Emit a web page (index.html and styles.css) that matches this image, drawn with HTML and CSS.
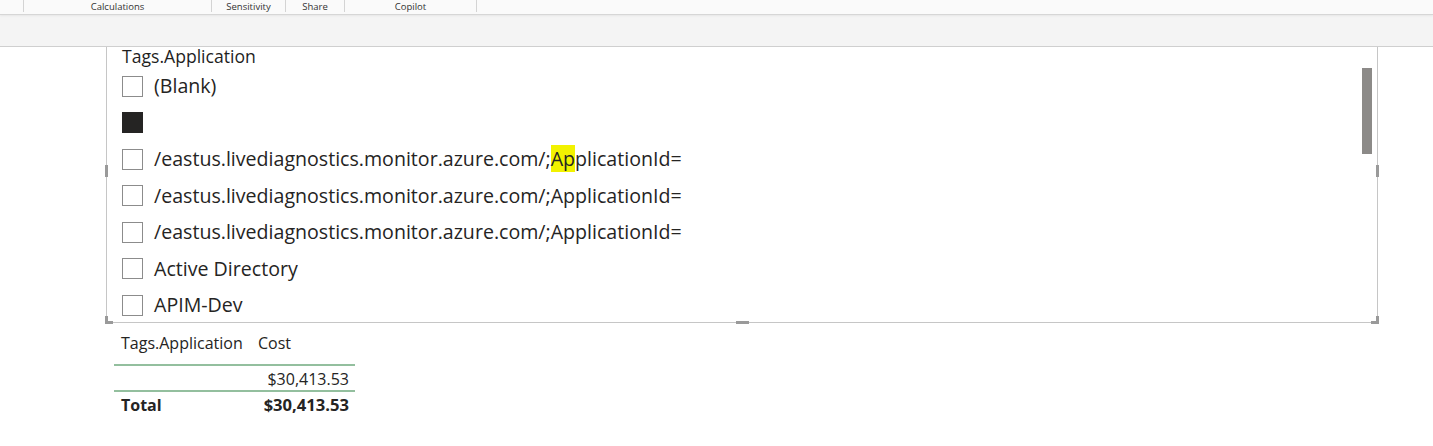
FILE: index.html
```html
<!DOCTYPE html>
<html>
<head>
<meta charset="utf-8">
<link rel="stylesheet" href="styles.css">
</head>
<body>
<div class="ribbon">
  <div class="seg seg0"></div>
  <div class="seg seg1">Calculations</div>
  <div class="seg seg2">Sensitivity</div>
  <div class="seg seg3">Share</div>
  <div class="seg seg4">Copilot</div>
</div>
<div class="toolbar"></div>
<div class="canvas">
  <div class="visual">
    <div class="slicer">
      <div class="title">Tags.Application</div>
      <div class="row first"><span class="box"></span><span class="label">(Blank)</span></div>
      <div class="row"><span class="box filled"></span><span class="label"></span></div>
      <div class="row"><span class="box"></span><span class="label">/eastus.livediagnostics.monitor.azure.com/;<span class="hl">Ap</span>plicationId=</span></div>
      <div class="row"><span class="box"></span><span class="label">/eastus.livediagnostics.monitor.azure.com/;ApplicationId=</span></div>
      <div class="row"><span class="box"></span><span class="label">/eastus.livediagnostics.monitor.azure.com/;ApplicationId=</span></div>
      <div class="row"><span class="box"></span><span class="label">Active Directory</span></div>
      <div class="row"><span class="box"></span><span class="label">APIM-Dev</span></div>
    </div>
    <div class="scrollbar"></div>
    <div class="handle h-left"></div>
    <div class="handle h-right"></div>
    <div class="handle h-bottom"></div>
    <div class="corner c-bl"></div>
    <div class="corner c-br"></div>
  </div>
  <div class="table">
    <div class="thead">
      <div class="c1">Tags.Application</div>
      <div class="c2">Cost</div>
    </div>
    <div class="tbody">
      <div class="c1"></div>
      <div class="c2 num">$30,413.53</div>
    </div>
    <div class="ttotal">
      <div class="c1">Total</div>
      <div class="c2 num">$30,413.53</div>
    </div>
  </div>
</div>
</body>
</html>
```
FILE: styles.css
```css
* { box-sizing: border-box; }
html, body { margin: 0; padding: 0; background: #ffffff; }
body { width: 1433px; height: 446px; overflow: hidden; font-family: "Open Sans", "Noto Sans", sans-serif; color: #252423; }

.ribbon {
  display: flex;
  height: 15px;
  background: #fafafa;
  border-bottom: 1px solid #d6d6d6;
  box-shadow: 0 1px 2px rgba(0,0,0,0.06);
  position: relative;
  z-index: 2;
}
.seg {
  height: 12px;
  border-right: 1px solid #d4d4d4;
  font-size: 9.5px;
  line-height: 14px;
  color: #333333;
  text-align: center;
  white-space: nowrap;
}
.seg0 { width: 24px; }
.seg1 { width: 188px; }
.seg2 { width: 74px; }
.seg3 { width: 59px; }
.seg4 { width: 132px; }

.toolbar {
  height: 32px;
  background: #f4f4f4;
  border-bottom: 1px solid #cfcfcf;
}

.canvas { padding-left: 106px; }

.visual {
  position: relative;
  width: 1272px;
  height: 276px;
  border-left: 1px solid #c6c6c6;
  border-right: 1px solid #c6c6c6;
  border-bottom: 1px solid #c6c6c6;
}
.slicer {
  padding-left: 15px;
}
.title {
  font-family: "Open Sans", "Noto Sans", sans-serif;
  font-size: 17.6px;
  line-height: 19px;
  height: 19px;
  color: #1f1f1f;
  font-weight: 500;
}
.row {
  display: flex;
  align-items: center;
  height: 36.5px;
}
.row.first { margin-top: 2px; }
.box {
  width: 21px;
  height: 21px;
  border: 1px solid #8c8c8c;
  background: #fff;
  flex: none;
}
.box.filled { background: #252423; border-color: #252423; }
.label {
  margin-left: 11px;
  font-size: 19.6px;
  line-height: 26px;
  white-space: nowrap;
  color: #252423;
}
.hl { background: #f2f200; }

.scrollbar {
  position: absolute;
  left: 1255px;
  top: 21px;
  width: 10px;
  height: 86px;
  background: #8c8a88;
}
.handle { position: absolute; background: #9a9a9a; }
.h-left { left: -2px; top: 118px; width: 3px; height: 12px; }
.h-right { right: -2px; top: 118px; width: 3px; height: 12px; }
.h-bottom { left: 629px; bottom: -2px; width: 13px; height: 3px; }
.corner { position: absolute; width: 8px; height: 8px; }
.c-bl { left: -2px; bottom: -2px; border-left: 3px solid #9a9a9a; border-bottom: 3px solid #9a9a9a; }
.c-br { right: -2px; bottom: -2px; border-right: 3px solid #9a9a9a; border-bottom: 3px solid #9a9a9a; }

.table {
  margin-left: 8px;
  width: 241px;
  font-size: 16px;
  line-height: 20px;
  color: #252423;
}
.thead, .tbody, .ttotal { display: flex; align-items: flex-start; }
.thead { height: 43px; padding-top: 10px; border-bottom: 2px solid #93bf9e; }
.tbody { height: 26px; padding-top: 3px; border-bottom: 2px solid #93bf9e; }
.ttotal { height: 30px; padding-top: 3px; font-weight: 700; }
.ttotal .num { font-size: 16.6px; }
.c1 { width: 144px; padding-left: 7px; white-space: nowrap; }
.c2 { flex: 1; white-space: nowrap; }
.num { text-align: right; padding-right: 6px; }
```
